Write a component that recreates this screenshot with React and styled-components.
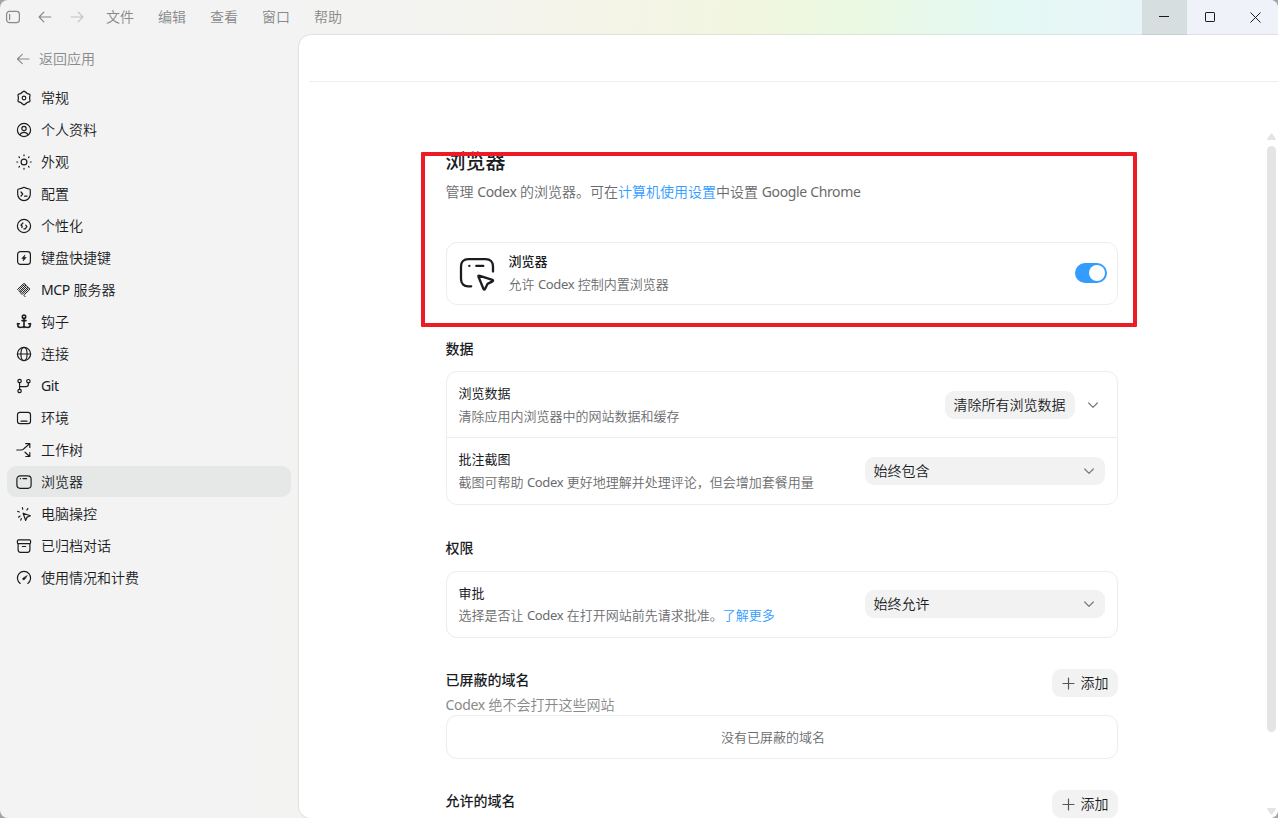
import React, { useState } from 'react'
import styled, { createGlobalStyle, ThemeProvider } from 'styled-components'

const theme = {
	text: '#1a1c1f',
	textSoft: '#6a6b6d',
	textMuted: '#88898a',
	link: '#339cff',
	border: '#ededed',
	control: '#f2f2f2',
	active: '#e6e8e7',
	highlight: '#ed1c24',
}

const GlobalStyle = createGlobalStyle`
	* {
		box-sizing: border-box;
	}

	body {
		margin: 0;
		overflow: hidden;
		background: #a5a5a5;
		color: ${theme.text};
		font-family: "Noto Sans", "Noto Sans CJK SC", sans-serif;
		font-size: 14px;
		font-weight: 350;
	}

	button {
		border: 0;
		padding: 0;
		background: none;
		color: inherit;
		font: inherit;
	}

	svg {
		display: block;
		flex-shrink: 0;
	}
`

const WindowX = styled.div`
	height: 100vh;
	display: flex;
	flex-direction: column;
	overflow: hidden;
	border-radius: 8px;
	background: linear-gradient(94deg, #f3f3f3 0, #f3f3f3 290px, #f3f3f0 440px, #f4f4e6 640px, #f1f6df 750px, #eaf9e3 860px, #e4f8f4 1010px, #e8f5f8 1130px, #ecf3f9 1230px, #f2f2f8 1290px);
`

const TitleBarX = styled.header`
	height: 35px;
	flex-shrink: 0;
	display: flex;
	align-items: center;
	padding-left: 5px;
	color: ${props => props.theme.textMuted};
`

const NavIconX = styled.button`
	width: 32px;
	display: flex;
	padding-bottom: 1px;
	opacity: ${props => props.$faded ? 0.45 : 1};
`

const MenuX = styled.nav`
	flex: 1;
	display: flex;
	gap: 24px;
	padding: 0 0 2px 5px;
	line-height: 20px;
`

const WindowButtonX = styled.button`
	width: ${props => props.$width}px;
	height: 35px;
	display: flex;
	align-items: center;
	justify-content: center;
	padding-bottom: ${props => props.$lift || 1}px;
	color: #1b1b1b;
	background: ${props => props.$hovered ? '#d6dee0' : '#eff2f8'};
`

const BodyX = styled.div`
	flex: 1;
	min-height: 0;
	display: flex;
`

const SidebarX = styled.aside`
	width: 299px;
	flex-shrink: 0;
	padding: 14px 8px 0 7px;
`

const BackX = styled.button`
	display: flex;
	align-items: center;
	gap: 9px;
	height: 20px;
	margin-bottom: 13px;
	padding-left: 9px;
	color: ${props => props.theme.textMuted};
	line-height: 20px;
`

const NavListX = styled.nav`
	display: flex;
	flex-direction: column;
	gap: 1px;
`

const NavItemX = styled.a`
	height: 31px;
	display: flex;
	align-items: center;
	gap: 9px;
	padding-left: 9px;
	border-radius: 9px;
	line-height: 20px;
	background: ${props => props.$active ? props.theme.active : 'transparent'};
`

const MainX = styled.main`
	position: relative;
	flex: 1;
	min-width: 0;
	display: flex;
	flex-direction: column;
	border-radius: 12px 0 0 12px;
	background: #fff;
	box-shadow: 0 0 0 1px rgba(0, 0, 0, .07);
`

const MainHeaderX = styled.div`
	height: 47px;
	flex-shrink: 0;
	margin-left: 10px;
	border-bottom: 1px solid #efefef;
`

const ScrollX = styled.div`
	flex: 1;
	min-height: 0;
	margin-top: 50px;
	display: flex;
	overflow: hidden;
`

const ContentX = styled.div`
	width: 672px;
	margin: 0 auto 0 146.6px;
	padding-top: 16px;
`

const ScrollbarX = styled.div`
	width: 13px;
	display: flex;
	flex-direction: column;
	align-items: center;
	padding-top: 1px;
	color: #e4e4e4;
`

const ThumbX = styled.div`
	width: 9px;
	height: 586px;
	margin: 6px 0 76px;
	border-radius: 5px;
	background: currentColor;
`

// Latin words sit heavier and tighter than the characters around them
const LatinX = styled.span`
	font-weight: 400;
	letter-spacing: -.35px;
`

const TitleX = styled.h1`
	margin: 0 0 6px;
	font-size: 20px;
	font-weight: 500;
	line-height: 28px;
`

const LeadX = styled.p`
	margin: 0 0 40px;
	color: ${props => props.theme.textSoft};
	line-height: 20px;
`

const LinkX = styled.a`
	color: ${props => props.theme.link};
`

const SectionX = styled.section`
	margin-top: ${props => props.$gap}px;
`

const SectionTitleX = styled.h2`
	margin: 0;
	font-size: 14px;
	font-weight: 500;
	line-height: 20px;
`

const SectionHeadX = styled.div`
	display: flex;
	justify-content: space-between;
	align-items: flex-start;
	height: ${props => props.$height}px;
`

const SectionTextX = styled.div`
	padding-top: 1px;
`

const SectionNoteX = styled.p`
	margin: 5px 0 0;
	color: ${props => props.theme.textMuted};
	line-height: 20px;
`

const CardX = styled.div`
	border: 1px solid ${props => props.theme.border};
	border-radius: 11px;
`

const RowX = styled.div`
	height: ${props => props.$height}px;
	display: flex;
	align-items: center;
	padding: 0 ${props => props.$right || 12}px ${props => props.$bottom ?? 1}px 12px;

	& + & {
		border-top: 1px solid ${props => props.theme.border};
	}
`

const RowTextX = styled.div`
	flex: 1;
	display: grid;
	gap: ${props => props.$loose ? 5 : 4}px;
	padding-bottom: ${props => props.$lift ?? 1}px;
	font-size: 13px;
	line-height: 18px;
`

const RowTitleX = styled.div`
	font-weight: ${props => props.$strong ? 500 : 400};
`

const RowNoteX = styled.div`
	color: ${props => props.theme.textSoft};
`

const FeatureIconX = styled.div`
	width: 38px;
	margin-right: 12px;
	padding-top: 3px;
`

const ToggleX = styled.button`
	width: 32px;
	height: 20px;
	display: flex;
	align-items: center;
	justify-content: ${props => props.$on ? 'flex-end' : 'flex-start'};
	padding: 0 2px;
	border-radius: 10px;
	background: ${props => props.$on ? props.theme.link : '#d5d5d5'};

	&::after {
		content: '';
		width: 16px;
		height: 16px;
		border-radius: 50%;
		background: #fff;
	}
`

const PillX = styled.button`
	height: 28px;
	display: flex;
	align-items: center;
	gap: 6px;
	padding: 0 9px;
	border-radius: 9px;
	background: ${props => props.theme.control};
	line-height: 20px;
`

const SelectX = styled( PillX )`
	width: 240px;
	justify-content: space-between;
	color: ${props => props.theme.text};
`

const ExpandX = styled.button`
	width: 14px;
	margin: 0 5px 0 11px;
`

const EmptyX = styled.div`
	height: 42px;
	padding-right: 17px;
	color: ${props => props.theme.textSoft};
	font-size: 13px;
	line-height: 42px;
	text-align: center;
`

// Marks the part of the page that the reader should look at
const HighlightX = styled.div`
	position: absolute;
	z-index: 2;
	top: 117px;
	left: 122px;
	width: 716px;
	height: 175px;
	border: 4px solid ${props => props.theme.highlight};
	border-radius: 1px;
	pointer-events: none;
`

const Icon = ( { size = 16, box = 16, stroke = 1.2, children } ) => (
	<svg width={size} height={size} viewBox={`0 0 ${box} ${box}`} fill="none" stroke="currentColor" strokeWidth={stroke} strokeLinecap="round" strokeLinejoin="round">
		{children}
	</svg>
)

const ArrowIcon = ( { flip } ) => (
	<Icon>
		<path d={flip ? 'M2.2 8H13.6M9.2 3.2L13.9 8L9.2 12.8' : 'M13.8 8H2.4M6.8 3.2L2.1 8L6.8 12.8'}/>
	</Icon>
)

const ChevronIcon = () => (
	<svg width="14" height="14" viewBox="0 0 14 14" fill="none" stroke="#77787a" strokeWidth="1.2" strokeLinecap="round" strokeLinejoin="round">
		<path d="M2.7 5L7 9.3L11.3 5"/>
	</svg>
)

const PlusIcon = () => (
	<svg width="14" height="14" viewBox="0 0 14 14" fill="none" stroke="#55565a" strokeWidth="1.2" strokeLinecap="round">
		<path d="M7.5 2V13M2 7.5H13"/>
	</svg>
)

const navItems = [
	{
		label: '常规',
		icon: <><path d="M5.2 3.15C6.6 2.4 7 1.2 8 1.2C9 1.2 9.4 2.4 10.8 3.15C12.15 3.99 13.39 3.73 13.89 4.6C14.39 5.47 13.55 6.41 13.6 8C13.55 9.59 14.39 10.53 13.89 11.4C13.39 12.27 12.15 12.01 10.8 12.85C9.4 13.6 9 14.8 8 14.8C7 14.8 6.6 13.6 5.2 12.85C3.85 12.01 2.61 12.27 2.11 11.4C1.61 10.53 2.45 9.59 2.4 8C2.45 6.41 1.61 5.47 2.11 4.6C2.61 3.73 3.85 3.99 5.2 3.15Z"/><circle cx="8" cy="8" r="1.8"/></>,
	},
	{
		label: '个人资料',
		icon: <><circle cx="8" cy="8" r="6.6"/><circle cx="8" cy="6.5" r="2.2"/><path d="M4 12.8C4.7 11.2 6.1 10.3 8 10.3S11.3 11.2 12 12.8"/></>,
	},
	{
		label: '外观',
		icon: <><circle cx="8" cy="8" r="2.9"/><path d="M8 .8V1.7M8 14.3V15.2M.8 8H1.7M14.3 8H15.2M2.9 2.9L3.5 3.5M12.5 12.5L13.1 13.1M2.9 13.1L3.5 12.5M12.5 3.5L13.1 2.9"/></>,
	},
	{
		label: '配置',
		icon: <><path d="M8 1.3C9.7 2.2 11.6 2.8 13.3 3C14 3.1 14.3 3.5 14.3 4.2V8.3C14.3 11.7 11.4 14.6 8 14.6S1.7 11.7 1.7 8.3V4.2C1.7 3.5 2 3.1 2.7 3C4.4 2.8 6.3 2.2 8 1.3Z"/><path d="M5 6L6.7 8L5 10M8.6 10.2H11"/></>,
	},
	{
		label: '个性化',
		icon: <><circle cx="8" cy="8" r="6.6"/><path d="M6.9 5L5 7.2L6.3 8.2L5.9 9.7M9.7 7.2L10.9 8.6L9.2 10.8L7.9 10.9"/></>,
	},
	{
		label: '键盘快捷键',
		icon: <><rect x="1.6" y="1.6" width="12.8" height="12.8" rx="2.8"/><path d="M8.7 5.2L5.8 8.6H7.6L7.2 10.9L10.2 7.4H8.3Z" fill="currentColor" strokeWidth=".6"/></>,
	},
	{
		label: <span><LatinX>MCP</LatinX> 服务器</span>,
		stroke: 1,
		icon: <path d="M1.6 7.4L7.1 2.1C8.6.8 10.4 2.6 9.1 4L4.6 8.4M9 4C10.4 2.7 12.4 4.5 11.1 6L6.4 10.5M11.2 6C12.6 4.8 14.5 6.5 13.2 8L8.3 12.6C7.8 13.1 7.9 13.4 8.3 13.8L9.2 14.7M8.1 2.9L3.4 7.5C1.9 9 3.8 10.8 5.2 9.5M10 5L5.2 9.6C3.8 11.1 5.7 12.9 7.1 11.6L12.2 6.9"/>,
	},
	{
		label: '钩子',
		stroke: 1.6,
		icon: <><circle cx="8" cy="2.7" r="1.7"/><path d="M8 4.4V13.6M6 6.6H10M1.8 9.6V11C1.8 12.8 2.8 13.5 4.4 13.5C6.2 13.5 7.4 13.2 8 12.2C8.6 13.2 9.8 13.5 11.6 13.5C13.2 13.5 14.2 12.8 14.2 11V9.6M1.3 10L3.3 9.8M14.7 10L12.7 9.8"/></>,
	},
	{
		label: '连接',
		icon: <><circle cx="8" cy="8" r="6.6"/><ellipse cx="8" cy="8" rx="3.1" ry="6.6"/><path d="M1.4 8H14.6"/></>,
	},
	{
		label: <LatinX>Git</LatinX>,
		icon: <><circle cx="3.6" cy="3" r="1.7"/><circle cx="3.6" cy="13" r="1.7"/><circle cx="12.4" cy="3.2" r="1.7"/><path d="M3.6 4.7V11.3M3.6 8.7H10C11.6 8.7 12.4 7.7 12.4 6.3V4.9"/></>,
	},
	{
		label: '环境',
		icon: <><rect x="1.5" y="2.3" width="13" height="11.4" rx="2.4"/><path d="M5 11.2H11"/></>,
	},
	{
		label: '工作树',
		icon: <path d="M.8 8H5C6.2 8 7 7.7 7.8 6.8L13.5 1.9M9.7 1.6H13.8V5.5M9 10.2L13.4 14.2M13.8 10.6V14.5H9.8"/>,
	},
	{
		label: '浏览器',
		active: true,
		icon: <><rect x=".9" y="1.9" width="14.2" height="12.4" rx="3.2"/><path d="M4.3 4.7H4.5M7 4.7H10.6"/></>,
	},
	{
		label: '电脑操控',
		icon: <><path d="M7.1 7.2L14.4 9.7L11.1 11.1L9.6 14.4Z"/><path d="M6.4 1.5L6.7 3.2M1.6 5.3L3.3 6M11.8 2.6L10.9 4M2.5 11.2L4 10.1M4.8 14.1L5.3 12.5"/></>,
	},
	{
		label: '已归档对话',
		icon: <><rect x="1.4" y="1.9" width="13.2" height="3.7" rx="1.2"/><path d="M2.1 5.7V11.8C2.1 13.5 2.9 14.3 4.5 14.3H11.5C13.1 14.3 13.9 13.5 13.9 11.8V5.7M6.3 8.5H9.7"/></>,
	},
	{
		label: '使用情况和计费',
		icon: <><path d="M4.2 13.4A6.6 6.6 0 1 1 11.8 13.4"/><path d="M7 9.5C6.3 8.8 6.8 8.1 7.5 7.7L11.3 5.4L9 9.1C8.5 9.9 7.7 10.2 7 9.5Z" fill="currentColor" strokeWidth=".5"/></>,
	},
]

const BrowserIcon = () => (
	<svg width="38" height="36" viewBox="0 0 38 36" fill="none" stroke="#1a1c1f" strokeWidth="2.3" strokeLinecap="round" strokeLinejoin="round">
		<path d="M12.2 29.3H9.2C4.8 29.3 2 26.5 2 22.1V9.4C2 5 4.8 2.2 9.2 2.2H26.8C31.2 2.2 34 5 34 9.4V14.5"/>
		<path d="M10.3 8.9H10.4M17.3 8.9H24.3"/>
		<path d="M20.1 18.7L33.4 22.8C34.3 23.1 34.3 24 33.5 24.4L28.5 26.9L26 32C25.6 32.8 24.7 32.7 24.4 31.8L19.4 19.5C19.2 18.9 19.5 18.5 20.1 18.7Z"/>
	</svg>
)

const AddButton = () => (
	<PillX><PlusIcon/>添加</PillX>
)

const Select = ( { children } ) => (
	<SelectX>{children}<ChevronIcon/></SelectX>
)

const App = () => {

	const [ enabled, setEnabled ] = useState( true )

	return (
		<ThemeProvider theme={theme}>
			<GlobalStyle/>
			<WindowX>
				<TitleBarX>
					<NavIconX>
						<Icon><rect x="1.6" y="2.4" width="12.8" height="11.2" rx="2.8"/><path d="M4.6 5.4V10.6"/></Icon>
					</NavIconX>
					<NavIconX><ArrowIcon/></NavIconX>
					<NavIconX $faded><ArrowIcon flip/></NavIconX>
					<MenuX>
						{[ '文件', '编辑', '查看', '窗口', '帮助' ].map( label => <span key={label}>{label}</span> )}
					</MenuX>
					<WindowButtonX $width={45} $hovered $lift={2}>
						<svg width="11" height="11"><path d="M0 5.5H10" stroke="currentColor"/></svg>
					</WindowButtonX>
					<WindowButtonX $width={46}>
						<svg width="10" height="10"><rect x=".5" y=".5" width="9" height="9" rx=".6" fill="none" stroke="currentColor"/></svg>
					</WindowButtonX>
					<WindowButtonX $width={45}>
						<svg width="11" height="11"><path d="M.5 .5L10.5 10.5M10.5 .5L.5 10.5" stroke="currentColor"/></svg>
					</WindowButtonX>
				</TitleBarX>

				<BodyX>
					<SidebarX>
						<BackX><Icon size={14}><path d="M14.8 8H2M7.2 2.6L1.6 8L7.2 13.4"/></Icon>返回应用</BackX>
						<NavListX>
							{navItems.map( ( item, i ) => (
								<NavItemX key={i} $active={item.active}>
									<Icon stroke={item.stroke}>{item.icon}</Icon>
									{item.label}
								</NavItemX>
							) )}
						</NavListX>
					</SidebarX>

					<MainX>
						<MainHeaderX/>
						<ScrollX>
							<ContentX>
								<TitleX>浏览器</TitleX>
								<LeadX>管理 <LatinX>Codex</LatinX> 的浏览器。可在<LinkX>计算机使用设置</LinkX>中设置 <LatinX>Google Chrome</LatinX></LeadX>

								<CardX>
									<RowX $height={61} $right={10}>
										<FeatureIconX><BrowserIcon/></FeatureIconX>
										<RowTextX $loose $lift={1}>
											<RowTitleX $strong>浏览器</RowTitleX>
											<RowNoteX>允许 <LatinX>Codex</LatinX> 控制内置浏览器</RowNoteX>
										</RowTextX>
										<ToggleX $on={enabled} onClick={() => setEnabled( !enabled )}/>
									</RowX>
								</CardX>

								<SectionX $gap={34}>
									<SectionHeadX $height={32}><SectionTitleX>数据</SectionTitleX></SectionHeadX>
									<CardX>
										<RowX $height={65} $bottom={0}>
											<RowTextX $loose $lift={0}>
												<RowTitleX>浏览数据</RowTitleX>
												<RowNoteX>清除应用内浏览器中的网站数据和缓存</RowNoteX>
											</RowTextX>
											<PillX>清除所有浏览数据</PillX>
											<ExpandX><ChevronIcon/></ExpandX>
										</RowX>
										<RowX $height={67}>
											<RowTextX $loose $lift={0}>
												<RowTitleX>批注截图</RowTitleX>
												<RowNoteX>截图可帮助 <LatinX>Codex</LatinX> 更好地理解并处理评论，但会增加套餐用量</RowNoteX>
											</RowTextX>
											<Select>始终包含</Select>
										</RowX>
									</CardX>
								</SectionX>

								<SectionX $gap={33}>
									<SectionHeadX $height={33}><SectionTitleX>权限</SectionTitleX></SectionHeadX>
									<CardX>
										<RowX $height={65}>
											<RowTextX>
												<RowTitleX>审批</RowTitleX>
												<RowNoteX>选择是否让 <LatinX>Codex</LatinX> 在打开网站前先请求批准。<LinkX>了解更多</LinkX></RowNoteX>
											</RowTextX>
											<Select>始终允许</Select>
										</RowX>
									</CardX>
								</SectionX>

								<SectionX $gap={31}>
									<SectionHeadX $height={46}>
										<SectionTextX>
											<SectionTitleX>已屏蔽的域名</SectionTitleX>
											<SectionNoteX><LatinX>Codex</LatinX> 绝不会打开这些网站</SectionNoteX>
										</SectionTextX>
										<AddButton/>
									</SectionHeadX>
									<CardX><EmptyX>没有已屏蔽的域名</EmptyX></CardX>
								</SectionX>

								<SectionX $gap={31}>
									<SectionHeadX $height={46}>
										<SectionTextX>
											<SectionTitleX>允许的域名</SectionTitleX>
										</SectionTextX>
										<AddButton/>
									</SectionHeadX>
								</SectionX>
							</ContentX>
							<ScrollbarX>
								<svg width="9" height="7" viewBox="0 0 9 7" fill="currentColor"><path d="M3.8.6Q4.5-.3 5.2.6L8.9 6Q9.1 7 8.2 7H.8Q-.1 7 .1 6Z"/></svg>
								<ThumbX/>
								<svg width="9" height="7" viewBox="0 0 9 7" fill="currentColor"><path d="M3.8 6.4Q4.5 7.3 5.2 6.4L8.9 1Q9.1 0 8.2 0H.8Q-.1 0 .1 1Z"/></svg>
							</ScrollbarX>
						</ScrollX>
						<HighlightX/>
					</MainX>
				</BodyX>
			</WindowX>
		</ThemeProvider>
	)

}

export default App
